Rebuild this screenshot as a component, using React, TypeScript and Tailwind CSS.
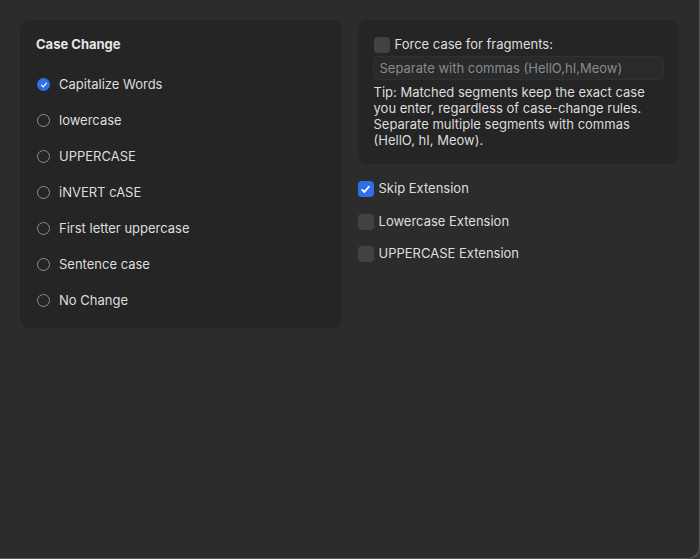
import { useState } from 'react';

const caseOptions = [
  'Capitalize Words',
  'lowercase',
  'UPPERCASE',
  'iNVERT cASE',
  'First letter uppercase',
  'Sentence case',
  'No Change',
];

const extOptions = ['Skip Extension', 'Lowercase Extension', 'UPPERCASE Extension'];

function Radio({ checked }: { checked: boolean }) {
  if (checked) {
    return (
      <span className="flex h-[13px] w-[13px] items-center justify-center rounded-full bg-[#2f6fe8]">
        <svg width="8" height="8" viewBox="0 0 8 8" fill="none">
          <path d="M1.6 4.2 3.2 5.8 6.4 2.2" stroke="white" strokeWidth="1.2" strokeLinecap="round" strokeLinejoin="round" />
        </svg>
      </span>
    );
  }
  return <span className="h-[13px] w-[13px] rounded-full border border-[#8e8e8e]" />;
}

function Checkbox({ checked }: { checked: boolean }) {
  if (checked) {
    return (
      <span className="flex h-4 w-4 items-center justify-center rounded-[4px] bg-[#2f6fe8]">
        <svg width="11" height="11" viewBox="0 0 11 11" fill="none">
          <path d="M2.2 5.8 4.4 8 8.8 2.8" stroke="white" strokeWidth="1.8" strokeLinecap="round" strokeLinejoin="round" />
        </svg>
      </span>
    );
  }
  return <span className="h-4 w-4 rounded-[4px] bg-[#424242]" />;
}

export default function App() {
  const [mode, setMode] = useState(0);
  const [force, setForce] = useState(false);
  const [ext, setExt] = useState(0);

  return (
    <div className="h-[559px] w-[700px] bg-[#3a3a3a]" style={{ fontFamily: 'Inter, "Liberation Sans", sans-serif' }}>
      <div className="flex h-full w-full items-start gap-4 rounded-br-[12px] border-r border-b border-[#595959] bg-[#2c2c2c] p-5 text-[13px] text-[#dedede]">
        {/* Case mode */}
        <div className="w-[322px] rounded-[10px] bg-[#252525] px-4 pt-[15px] pb-[9px]">
          <div className="text-[13px] font-bold text-[#e6e6e6]">Case Change</div>
          <div className="mt-[12px] flex flex-col">
            {caseOptions.map((label, i) => (
              <button
                key={label}
                onClick={() => setMode(i)}
                className="flex h-9 items-center gap-[9px] pl-[1px] text-left"
              >
                <Radio checked={mode === i} />
                <span>{label}</span>
              </button>
            ))}
          </div>
        </div>

        {/* Fragments + extension */}
        <div className="flex w-[322px] flex-col">
          <div className="rounded-[10px] bg-[#252525] pl-[15px] pr-[15px] pt-[15px] pb-4">
            <button onClick={() => setForce(!force)} className="flex h-5 items-center gap-[5px] pl-[1px]">
              <Checkbox checked={force} />
              <span>Force case for fragments:</span>
            </button>
            <div className="mt-[1px] h-6 rounded-[5px] border border-[#303030] bg-[#282a2c] px-[6px] leading-[22px] text-[#8a8a8a]">
              Separate with commas (HellO,hI,Meow)
            </div>
            <p className="mt-[4px] pl-[1px] leading-4 text-[#dcdcdc]">
              Tip: Matched segments keep the exact case you enter, regardless of case-change rules. Separate multiple segments with commas (HellO, hI, Meow).
            </p>
          </div>

          <div className="mt-4 flex flex-col gap-[14.5px]">
            {extOptions.map((label, i) => (
              <button
                key={label}
                onClick={() => setExt(ext === i ? -1 : i)}
                className="flex h-[18px] items-center gap-[5px] text-left"
              >
                <Checkbox checked={ext === i} />
                <span>{label}</span>
              </button>
            ))}
          </div>
        </div>
      </div>
    </div>
  );
}
